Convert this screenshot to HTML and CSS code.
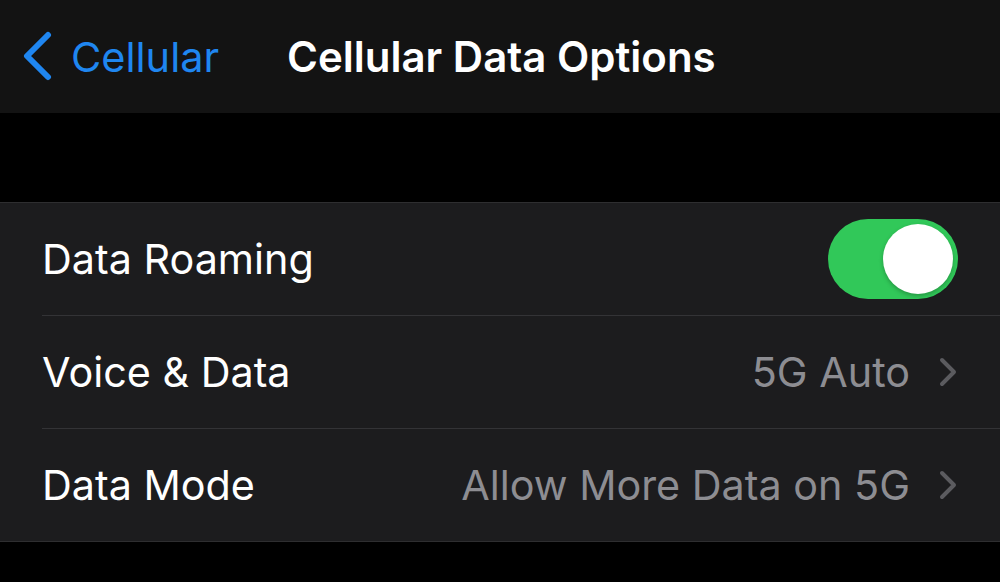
FILE: index.html
```html
<!DOCTYPE html>
<html>
<head>
<meta charset="utf-8">
<link rel="stylesheet" href="styles.css">
</head>
<body>
<header class="nav">
  <div class="back">
    <svg class="back-chevron" width="30" height="50" viewBox="0 0 30 50"><path d="M26 4 L5 25 L26 46" fill="none" stroke="#1f86f0" stroke-width="6" stroke-linecap="round" stroke-linejoin="round"/></svg>
    <span class="back-label">Cellular</span>
  </div>
  <h1 class="title">Cellular Data Options</h1>
</header>
<div class="spacer"></div>
<section class="group">
  <div class="row">
    <span class="label">Data Roaming</span>
    <span class="toggle"><span class="knob"></span></span>
  </div>
  <div class="row">
    <span class="label">Voice &amp; Data</span>
    <span class="value">5G Auto</span>
    <svg class="chev" width="20" height="30" viewBox="0 0 20 30"><path d="M4 3 L16 15 L4 27" fill="none" stroke="#5b5b5f" stroke-width="4" stroke-linecap="round" stroke-linejoin="round"/></svg>
  </div>
  <div class="row">
    <span class="label">Data Mode</span>
    <span class="value">Allow More Data on 5G</span>
    <svg class="chev" width="20" height="30" viewBox="0 0 20 30"><path d="M4 3 L16 15 L4 27" fill="none" stroke="#5b5b5f" stroke-width="4" stroke-linecap="round" stroke-linejoin="round"/></svg>
  </div>
</section>
</body>
</html>
```
FILE: styles.css
```css
html, body {
  margin: 0;
  padding: 0;
  background: #000;
  font-family: Inter, "Noto Sans", sans-serif;
  height: 582px;
  overflow: hidden;
}
.nav {
  height: 113px;
  background: #131313;
  display: flex;
  align-items: center;
  padding-left: 22px;
  box-sizing: border-box;
}
.back {
  display: flex;
  align-items: center;
  color: #1f86f0;
  width: 265px;
}
.back-chevron {
  margin-right: 19px;
  margin-top: -2px;
}
.back-label {
  font-size: 41.5px;
}
.title {
  margin: 0;
  color: #fff;
  font-size: 42px;
  font-weight: 600;
}
.spacer {
  height: 89px;
}
.group {
  background: #1c1c1e;
  border-top: 1px solid #2e2e30;
  border-bottom: 1px solid #2e2e30;
  padding-left: 42px;
}
.row {
  height: 112px;
  display: flex;
  align-items: center;
  padding-right: 42px;
  border-bottom: 1px solid #333336;
}
.row:last-child {
  border-bottom: none;
}
.label {
  color: #fff;
  font-size: 41.3px;
  flex: 1;
}
.value {
  color: #8d8d92;
  font-size: 41.3px;
  margin-right: 28px;
}
.chev {
  display: block;
}
.toggle {
  width: 130px;
  height: 80px;
  border-radius: 40px;
  background: #31c859;
  display: flex;
  align-items: center;
  justify-content: flex-end;
  padding-right: 5px;
  box-sizing: border-box;
}
.knob {
  width: 70px;
  height: 70px;
  border-radius: 50%;
  background: #fff;
  box-shadow: 0 2px 4px rgba(0,0,0,0.25);
}
```
